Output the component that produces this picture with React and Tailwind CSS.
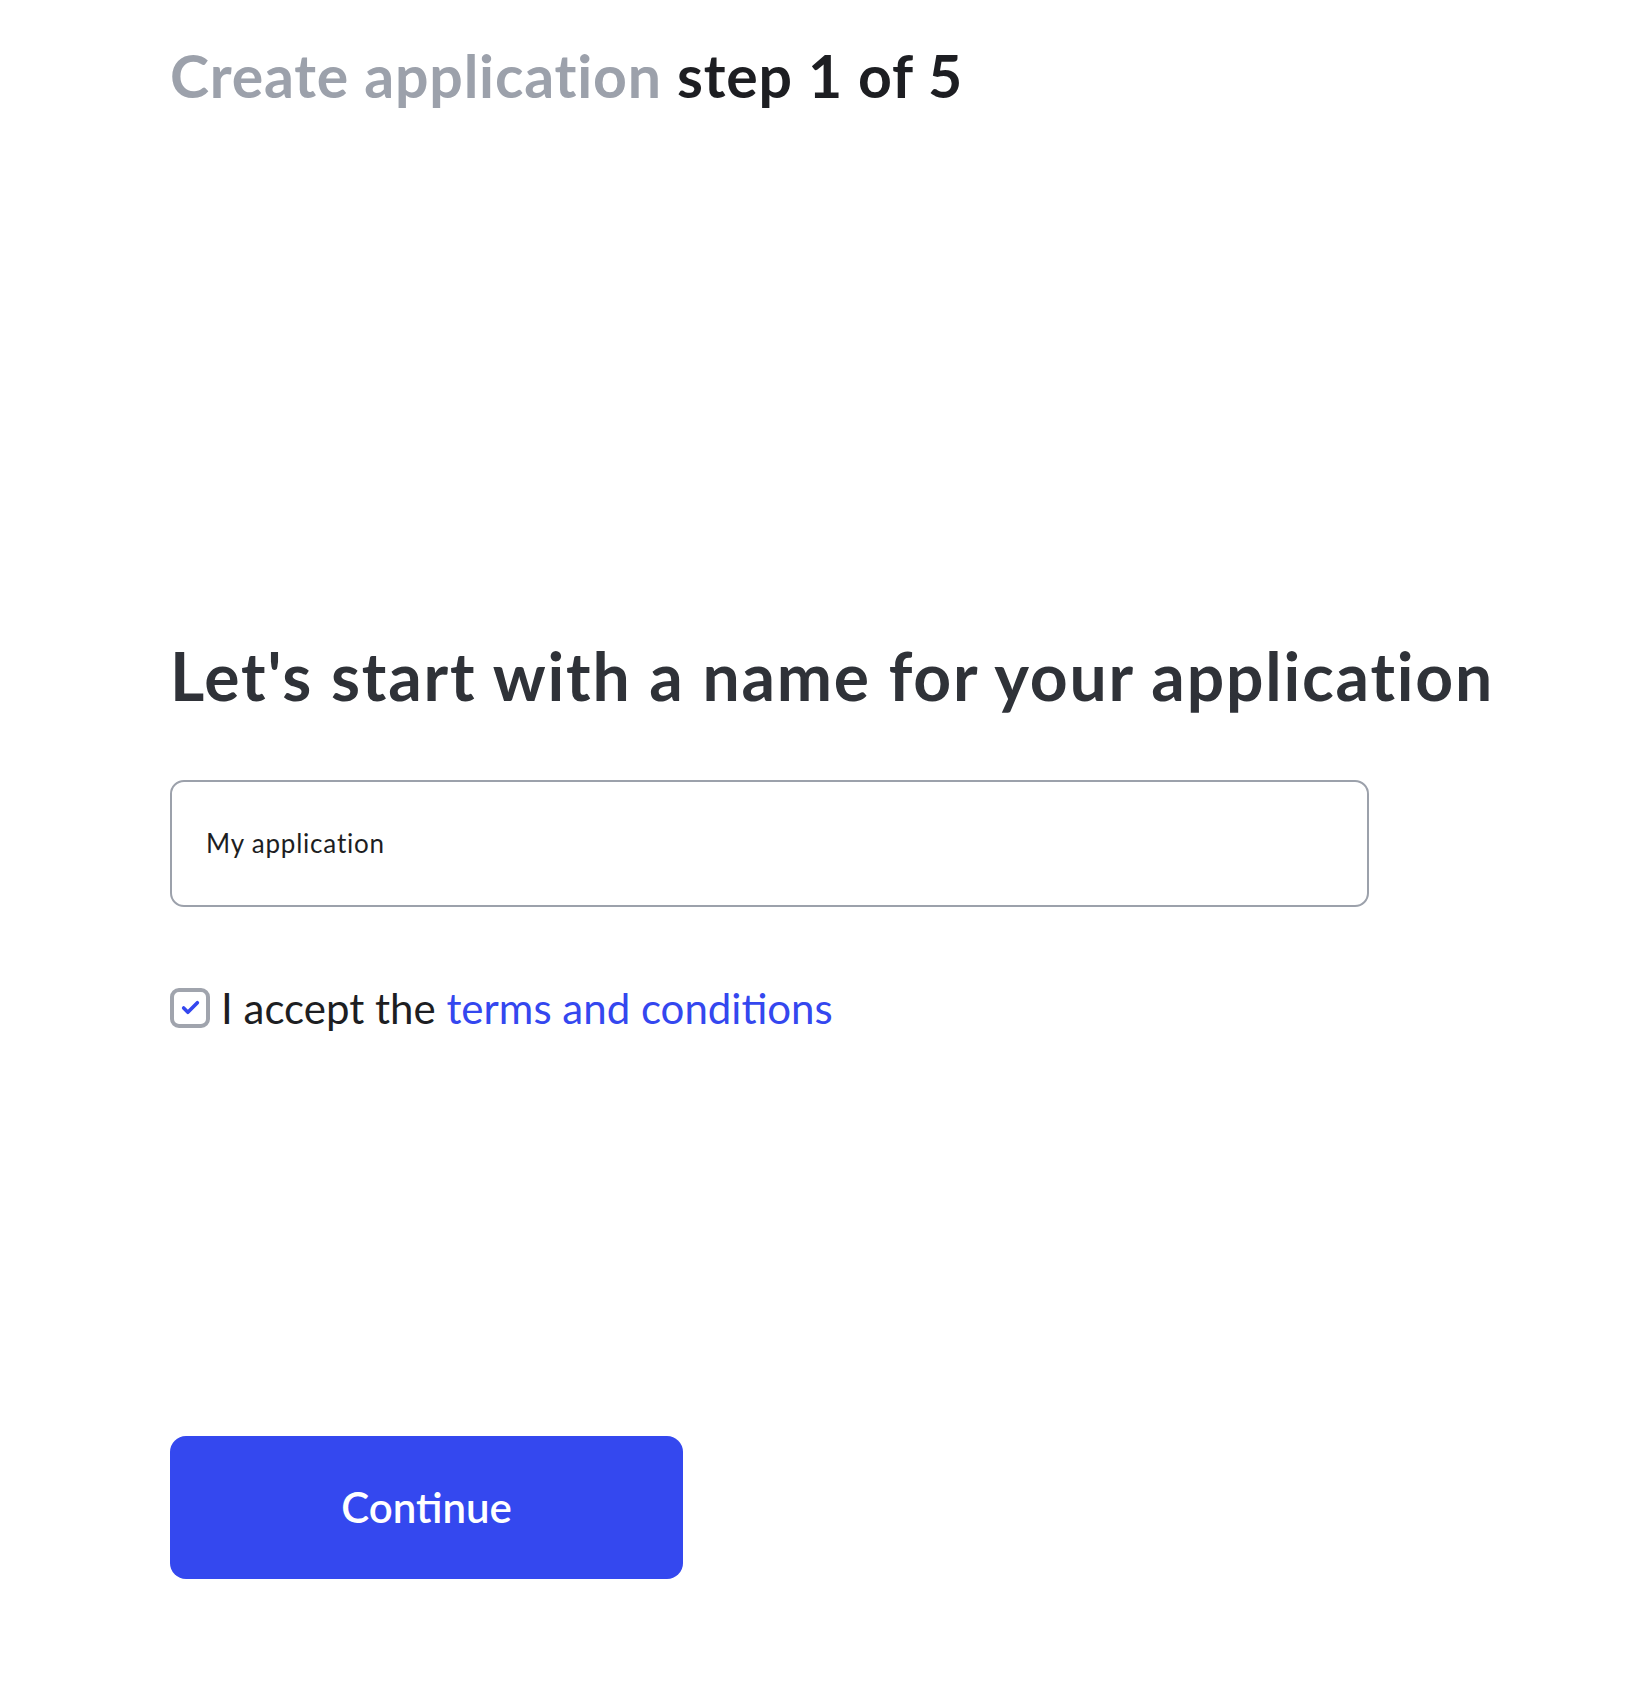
import React, { useState } from 'react';

const CheckIcon = () => (
  <svg className="w-[19px] h-[15px]" viewBox="0 0 18 14" fill="none">
    <path d="M2.5 7.5l4 4 9-9" stroke="#3447ef" strokeWidth="3.4" strokeLinecap="round" strokeLinejoin="round" />
  </svg>
);

export default function App() {
  const [name, setName] = useState('My application');
  const [accepted, setAccepted] = useState(true);

  return (
    <div className="min-h-screen bg-white font-['Lato',sans-serif]">
      <div className="pl-[170px] pt-[41px] flex flex-col items-start">
        {/* Page title */}
        <h1 className="text-[59px] leading-[1.2] font-bold tracking-[0.8px]">
          <span className="text-[#9ca1ab]">Create application</span>{' '}
          <span className="text-[#1d1e22]">step 1 of 5</span>
        </h1>

        {/* Question */}
        <h2 className="mt-[524px] text-[66px] leading-[1.2] font-bold text-[#2f3238] tracking-[1.8px]">
          Let's start with a name for your application
        </h2>

        {/* Name input */}
        <input
          value={name}
          onChange={(e) => setName(e.target.value)}
          className="mt-[65px] w-[1199px] h-[127px] rounded-[14px] border-2 border-[#9ca1ab] px-[34px] text-[26px] tracking-[0.8px] text-[#1d1e22] outline-none"
        />

        {/* Terms */}
        <label className="mt-[80px] flex items-center gap-[11px] cursor-pointer">
          <button
            type="button"
            onClick={() => setAccepted(!accepted)}
            className="w-[40px] h-[40px] rounded-[9px] border-4 border-[#a0a4ad] flex items-center justify-center"
          >
            {accepted && <CheckIcon />}
          </button>
          <span className="text-[42px] leading-none text-[#1d1e22]">
            I accept the <a href="#" className="text-[#3447ef]">terms and conditions</a>
          </span>
        </label>

        {/* Continue */}
        <button className="mt-[407px] w-[513px] h-[143px] rounded-[16px] bg-[#3448ef] text-white text-[42px] font-semibold">
          Continue
        </button>
      </div>
    </div>
  );
}
